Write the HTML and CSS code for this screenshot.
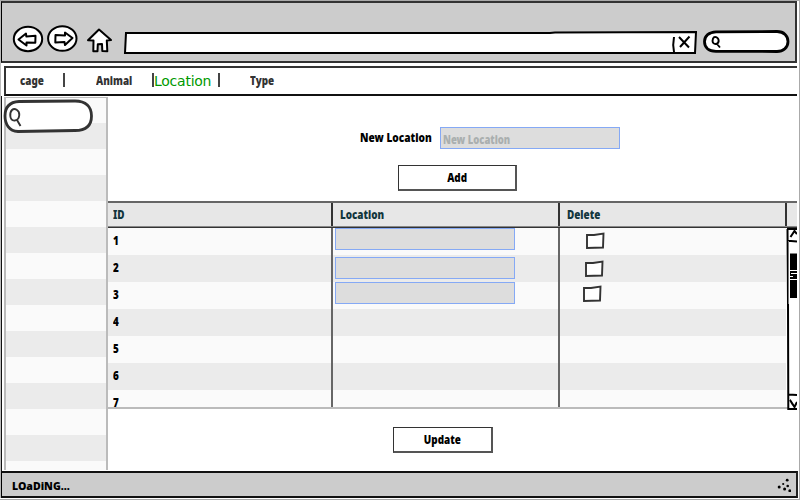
FILE: index.html
```html
<!DOCTYPE html>
<html lang="en">
<head>
<meta charset="utf-8">
<title>Location</title>
<link rel="stylesheet" href="styles.css">
</head>
<body>
<div class="window">
  <header class="toolbar">
    <svg class="nav-icons" width="106" height="32" viewBox="11 23 106 32">
      <g fill="#fff" stroke="#000" stroke-width="2" stroke-linejoin="round">
        <ellipse cx="28" cy="39" rx="14.200" ry="12.200"/>
        <ellipse cx="62.300" cy="38.500" rx="14.200" ry="12.300"/>
        <path d="M18.500 39.500L26 33.500L26.300 36.500L35.500 35.800L35.300 42.800L26.500 42.500L26.500 45.500Z"/>
        <path d="M72.500 38L65 32.500L65 35.500L55.500 35L55.300 42.500L64.500 42L65 45Z"/>
        <path d="M88 40.300L99 29.500L111 40L106.800 40.500L107.300 51.300L102.300 51L102 44L97.800 44.300L97.500 51.200L93.300 51.200L93.500 40.500Z"/>
      </g>
    </svg>
    <svg class="address" width="576" height="26" viewBox="123 30 576 26">
      <path d="M126 33L550 33L555 32.500L696 32L695 53L125 53Z" fill="#fff" stroke="#000" stroke-width="2"/>
      <path d="M674 37L673.200 45L674 52M679 37L689 47.500M689.500 36.500L680 47" fill="none" stroke="#000" stroke-width="2"/>
    </svg>
    <svg class="search" width="88" height="26" viewBox="702 29 88 26">
      <path d="M716 31.800L777 31.500C784 31.500 788 36 788 41.500C788 48 783 51.500 777 51.500L716 51.300C708 51.300 704.500 47 704.500 41.500C704.500 36 709 32 716 31.800Z" fill="#fff" stroke="#000" stroke-width="2.800"/>
      <path d="M713 38.500C714 36 718.500 36.500 718.700 41C718 45 713 45 712.500 41ZM717 44L720 47.500" fill="none" stroke="#000" stroke-width="1.900"/>
    </svg>
  </header>
  <nav class="menu">
    <span class="item cage"><b>cage</b></span><i class="bar"></i>
    <span class="item animal"><b>Animal</b></span><i class="bar"></i>
    <span class="item current">Location</span><i class="bar"></i>
    <span class="item type"><b>Type</b></span>
  </nav>
  <div class="body">
    <aside class="sidebar">
      <svg width="92" height="36" viewBox="3 98 92 36">
        <path d="M19 101.500L75 101C86 101 91.500 107 91.500 116C91.500 126 85 130.500 75 130.500L18 131.500C9 131 5 124 5 116C5 106 10 102 19 101.500Z" fill="#fff" stroke="#333" stroke-width="2.800"/>
        <path d="M12 110C14.500 107.500 19.500 110 19.300 115C18.500 122 11 122.500 10.300 116C10 113 11 111 12 110ZM17 120L20.500 126" fill="none" stroke="#333" stroke-width="1.900"/>
      </svg>
    </aside>
    <main class="content">
      <form class="add">
        <div class="field">
          <label><b>New Location</b></label>
          <div class="input"><b>New Location</b></div>
        </div>
        <div class="button add-button"><b>Add</b></div>
      </form>
      <section class="table">
        <div class="head">
          <div><b>ID</b></div><div><b>Location</b></div><div><b>Delete</b></div><div></div>
        </div>
        <div class="table-body">
          <div class="rows">
            <div class="row"><div><b>1</b></div><div><span class="input first"></span></div><div><svg class="check c1" width="20" height="18"><path d="M2 3L9 3L18.500 1.500L18 15.500L2 16Z"/></svg></div></div>
            <div class="row"><div><b>2</b></div><div><span class="input second"></span></div><div><svg class="check c2" width="20" height="18"><path d="M2 3L9 3L18.500 1.500L18 15.500L2 16Z"/></svg></div></div>
            <div class="row"><div><b>3</b></div><div><span class="input first"></span></div><div><svg class="check c3" width="20" height="18"><path d="M2 3L9 3L18.500 1.500L18 15.500L2 16Z"/></svg></div></div>
            <div class="row"><div><b>4</b></div><div></div><div></div></div>
            <div class="row"><div><b>5</b></div><div></div><div></div></div>
            <div class="row"><div><b>6</b></div><div></div><div></div></div>
            <div class="row"><div><b>7</b></div><div></div><div></div></div>
          </div>
          <svg class="scroll" width="11" height="182" viewBox="786 228 11 182">
            <path d="M788 228H797V409H789Z" fill="#fff"/>
            <path d="M787 229H797M787.500 229L788 304L788.300 409H797M788 240.800L797 241.500M788 394.500L797 395" fill="none" stroke="#000" stroke-width="2"/>
            <path d="M788.500 241V304" stroke="#777" stroke-width="1"/>
            <path d="M790.500 237L794.500 231L797 234M790 400L794.500 407L797 402M790 400L793 405" fill="none" stroke="#000" stroke-width="2"/>
            <path d="M790 253.500H797V298H790Z"/>
            <path d="M790 270.500H797M791 273.500H797M790 276.500H793M790 279.500H797" stroke="#fff" stroke-width="1"/>
          </svg>
        </div>
      </section>
      <div class="button update-button"><b>Update</b></div>
    </main>
  </div>
  <footer class="status">
    <b>LOaDiNG...</b>
    <svg width="14" height="14" viewBox="777 478 14 14"><g><circle cx="787.200" cy="480.200" r="1.400"/><circle cx="783.200" cy="484" r="1.100"/><circle cx="779.200" cy="487" r="1.500"/><circle cx="787.700" cy="486" r="1.300"/><circle cx="784.600" cy="488.900" r="1.500"/><circle cx="789.800" cy="490.700" r="1.500"/></g></svg>
  </footer>
</div>
</body>
</html>
```
FILE: styles.css
```css
* { box-sizing: border-box; }
body {
  margin: 0;
  width: 800px;
  height: 500px;
  overflow: hidden;
  background: #fff;
  border-top: 1px solid #aaa;
  border-right: 1px solid #aaa;
  border-bottom: 1px solid #aaa;
  font: bold 13px/16px "Noto Sans", sans-serif;
  color: #000;
}
.window {
  width: 798px;
  height: 497px;
  display: flex;
  flex-direction: column;
  border-left: 1px solid #bbb;
}
b {
  display: inline-block;
  white-space: nowrap;
  transform: scaleX(0.76);
  transform-origin: left center;
}
.toolbar {
  height: 62px;
  width: 796px;
  flex: none;
  border: 2px solid #333;
  border-left: 1px solid #000;
  background: #ccc;
  display: flex;
  align-items: flex-start;
  padding: 20px 0 0 9px;
}
.toolbar svg { flex: none; }
.address { margin: 7px 0 0 6px; }
.search { margin: 6px 0 0 3px; }
.menu {
  height: 31px;
  flex: none;
  margin: 3px 0 0 3px;
  border: 2px solid #333;
  border-right: 0;
  border-bottom-color: #111;
  width: 793px;
  display: flex;
  align-items: center;
  color: #333;
  padding: 0 0 3px 14px;
  height: 30px;
}
.item { flex: none; }
.cage { width: 43px; }
.animal { width: 56px; margin-left: 31px; }
.current {
  width: 64px;
  font: 14px/18px "DejaVu Sans", sans-serif;
  letter-spacing: -0.25px;
  color: #090;
  padding: 2px 0 0;
}
.type { margin-left: 30px; }
.bar { width: 2px; height: 14px; background: #444; }
.body {
  height: 375px;
  flex: none;
  display: flex;
  padding-top: 1px;
  border-left: 1px solid #111;
}
.sidebar {
  width: 104px;
  height: 373px;
  flex: none;
  margin: 0 0 0 2px;
  border: 2px solid #bbb;
  border-bottom: 0;
  border-top-width: 1px;
  background: repeating-linear-gradient(#fafafa 0 26px, #ebebeb 26px 52px) 0 -1px;
}
.sidebar svg { display: block; margin-left: -3px; }
.content { width: 689px; flex: none; display: flex; flex-direction: column; }
.add { height: 104px; margin: 0; display: flex; flex-direction: column; padding-top: 30px; }
.field { display: flex; align-items: center; padding-left: 252px; }
label { width: 80px; height: 18px; }
label b { transform: scaleX(0.78); }
.input {
  width: 180px;
  height: 22px;
  flex: none;
  border: 1px solid #85a9f5;
  background: #ddd;
  color: #aaafaf;
  padding: 3px 2px;
}
.field .input b { transform: scaleX(0.73); }
.button {
  width: 119px;
  height: 26px;
  flex: none;
  background: #fff;
  border: 1px solid #333;
  border-right: 2px solid #555;
  border-bottom: 2px solid #555;
  text-align: center;
  line-height: 23px;
}
.button b { transform-origin: center; }
.add-button { margin: 16px 0 0 290px; }
.update-button { width: 100px; margin: 18px 0 0 285px; }
.head {
  height: 27px;
  display: grid;
  grid-template-columns: 225px 227px 227px 10px;
  background: linear-gradient(#888 0 1px, #333 1px 2px) 0 23px / 100% 2px no-repeat #e7e7e7;
  border-top: 2px solid #666;
  color: #12363d;
}
.head div { height: 23px; padding: 3px 0 0 7px; border-right: 2px solid #333; }
.head div:first-child, .row div:first-child { padding-left: 5px; }
.head div:last-child { border: 0; }
.table-body { height: 181px; display: flex; border-bottom: 2px solid #bbb; }
.rows { width: 678px; height: 179px; flex: none; overflow: hidden; }
.row { height: 27px; display: grid; grid-template-columns: 225px 227px 226px; background: #fafafa; }
.row:nth-child(even) { background: #ebebeb; }
.row div { height: 27px; padding-top: 4px; border-right: 2px solid #666; }
.row div:last-child { border: 0; }
.row div:nth-child(n+2) { padding: 0; }
.row .input { display: block; margin-left: 2px; }
.row .second { margin-top: 2px; }
.check { display: block; fill: #fff; stroke: #333; stroke-width: 1.9; }
.c1 { margin: 4px 0 0 25px; }
.c2 { margin: 5px 0 0 24px; }
.c3 { margin: 3px 0 0 22px; }
.scroll { flex: none; }
.status {
  height: 27px;
  flex: none;
  border: 1px solid #000;
  border-top: 2px solid #111;
  border-right: 2px solid #222;
  border-bottom: 2px solid #111;
  background: #ccc;
  display: flex;
  justify-content: space-between;
  align-items: center;
  padding: 3px 5px 2px 10px;
}
.status b { font-size: 11px; margin-top: 2px; transform: scaleX(0.96); }
```
